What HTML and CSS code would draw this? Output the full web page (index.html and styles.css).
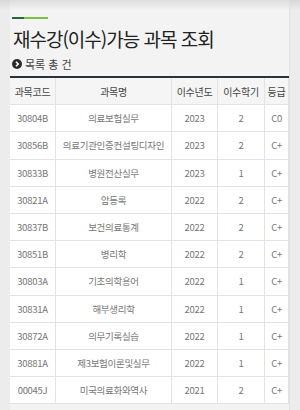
FILE: index.html
```html
<!DOCTYPE html>
<html lang="ko">
<head>
<meta charset="utf-8">
<link rel="stylesheet" href="styles.css">
</head>
<body>
<div class="page">
  <div class="panel">
    <div class="bar"><span class="bar-dark"></span><span class="bar-light"></span></div>
    <h1 class="title">재수강(이수)가능 과목 조회</h1>
    <div class="count">
      <svg class="ico" width="10" height="10" viewBox="0 0 10 10"><circle cx="5" cy="5" r="5" fill="#2b2b2b"/><path d="M4 2.8 L6.2 5 L4 7.2" stroke="#fff" stroke-width="1.6" fill="none"/></svg>
      <span>목록 총 건</span>
    </div>
    <table class="grid">
      <thead>
        <tr><th>과목코드</th><th>과목명</th><th>이수년도</th><th>이수학기</th><th>등급</th></tr>
      </thead>
      <tbody>
        <tr><td>30804B</td><td>의료보험실무</td><td>2023</td><td>2</td><td>C0</td></tr>
        <tr><td>30856B</td><td>의료기관인증컨설팅디자인</td><td>2023</td><td>2</td><td>C+</td></tr>
        <tr><td>30833B</td><td>병원전산실무</td><td>2023</td><td>1</td><td>C+</td></tr>
        <tr><td>30821A</td><td>암등록</td><td>2022</td><td>2</td><td>C+</td></tr>
        <tr><td>30837B</td><td>보건의료통계</td><td>2022</td><td>2</td><td>C+</td></tr>
        <tr><td>30851B</td><td>병리학</td><td>2022</td><td>2</td><td>C+</td></tr>
        <tr><td>30803A</td><td>기초의학용어</td><td>2022</td><td>1</td><td>C+</td></tr>
        <tr><td>30831A</td><td>해부생리학</td><td>2022</td><td>1</td><td>C+</td></tr>
        <tr><td>30872A</td><td>의무기록실습</td><td>2022</td><td>1</td><td>C+</td></tr>
        <tr><td>30881A</td><td>제3보험이론및실무</td><td>2022</td><td>1</td><td>C+</td></tr>
        <tr><td>00045J</td><td>미국의료화와역사</td><td>2021</td><td>2</td><td>C+</td></tr>
      </tbody>
    </table>
  </div>
</div>
</body>
</html>
```

FILE: styles.css
```css
html, body {
  margin: 0;
  padding: 0;
  background: #ececec;
  font-family: "Noto Sans CJK KR", "Noto Sans", sans-serif;
  overflow: hidden;
}
.page {
  height: 410px;
  background: linear-gradient(#d8d8d8 0, #ececec 10px, #ececec 100%);
  padding: 0 0 0 10px;
  box-sizing: border-box;
}
.panel {
  width: 280px;
  height: 410px;
  background: linear-gradient(#dcdcdc 0, #f3f3f3 10px, #f3f3f3 100%);
  border-right: 1px solid #e0e0e0;
  box-sizing: border-box;
  padding-top: 17px;
}
.bar {
  display: flex;
  height: 2px;
  margin-left: 2px;
}
.bar-dark { width: 12px; background: #1f6b3a; }
.bar-light { width: 24px; background: #7ac142; }
.title {
  margin: 5px 0 0 3px;
  font-size: 19px;
  font-weight: 400;
  line-height: 30px;
  color: #222;
  letter-spacing: -1px;
}
.count {
  display: flex;
  align-items: center;
  gap: 3px;
  margin: 2px 0 0 2px;
  font-size: 11px;
  line-height: 16px;
  color: #444;
}
.ico { display: block; }
.grid {
  margin-top: 4px;
  width: 279px;
  border-collapse: collapse;
  table-layout: fixed;
  border-top: 2px solid #29323f;
  font-size: 9.5px;
  color: #777;
}
.grid th, .grid td {
  height: 26.2px;
  padding: 0;
  text-align: center;
  border: 1px solid #e3e3e3;
  white-space: nowrap;
  overflow: hidden;
  letter-spacing: -0.3px;
}
.grid th:first-child, .grid td:first-child { border-left: none; width: 45px; }
.grid th:nth-child(2) { width: 115px; }
.grid th:nth-child(3) { width: 45px; }
.grid th:nth-child(4) { width: 46px; }
.grid th {
  background: #f5f5f5;
  font-weight: 400;
  color: #444;
  font-size: 10px;
}
.grid td { background: #fff; }
```
